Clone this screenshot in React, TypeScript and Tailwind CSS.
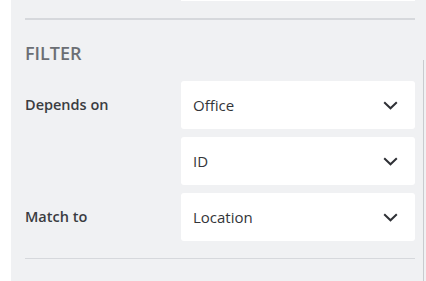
import * as React from 'react';

function Chevron() {
  return (
    <svg width="15" height="9" viewBox="0 0 15 9" fill="none">
      <path d="M1.2 1.2L7.5 7.3L13.8 1.2" stroke="#2f3136" strokeWidth="2" />
    </svg>
  );
}

function Select({ value }: { value: string }) {
  return (
    <div className="h-12 bg-white rounded-[3px] flex items-center justify-between pl-3 pr-[17px] text-[15px] text-[#333539]">
      <span>{value}</span>
      <Chevron />
    </div>
  );
}

export default function App() {
  return (
    <div className="w-[426px] h-[281px] bg-white flex overflow-hidden" style={{ fontFamily: '"Open Sans", "Noto Sans", sans-serif' }}>
      <div className="ml-[11px] flex-1 bg-[#f0f1f3] relative pl-[14px] pr-[11px]">
        {/* bottom of the previous select */}
        <div className="ml-[156px] h-px bg-white" />
        <div className="mt-[17px] h-[2px] bg-[#d6d8dc]" />

        <h3 className="mt-[21px] text-[18px] leading-6 font-semibold text-[#6b6e74]">FILTER</h3>

        <div className="mt-[16px] grid grid-cols-[156px_1fr] gap-y-2 items-center">
          <div className="text-[14.5px] font-semibold text-[#3a3c41]">Depends on</div>
          <Select value="Office" />
          <div />
          <Select value="ID" />
          <div className="text-[14.5px] font-semibold text-[#3a3c41]">Match to</div>
          <Select value="Location" />
        </div>

        <div className="mt-[17px] h-px bg-[#d6d8dc]" />

        {/* scrollbar edge */}
        <div className="absolute right-[2px] top-[60px] bottom-0 w-px bg-[#c9cbcf]" />
      </div>
    </div>
  );
}
